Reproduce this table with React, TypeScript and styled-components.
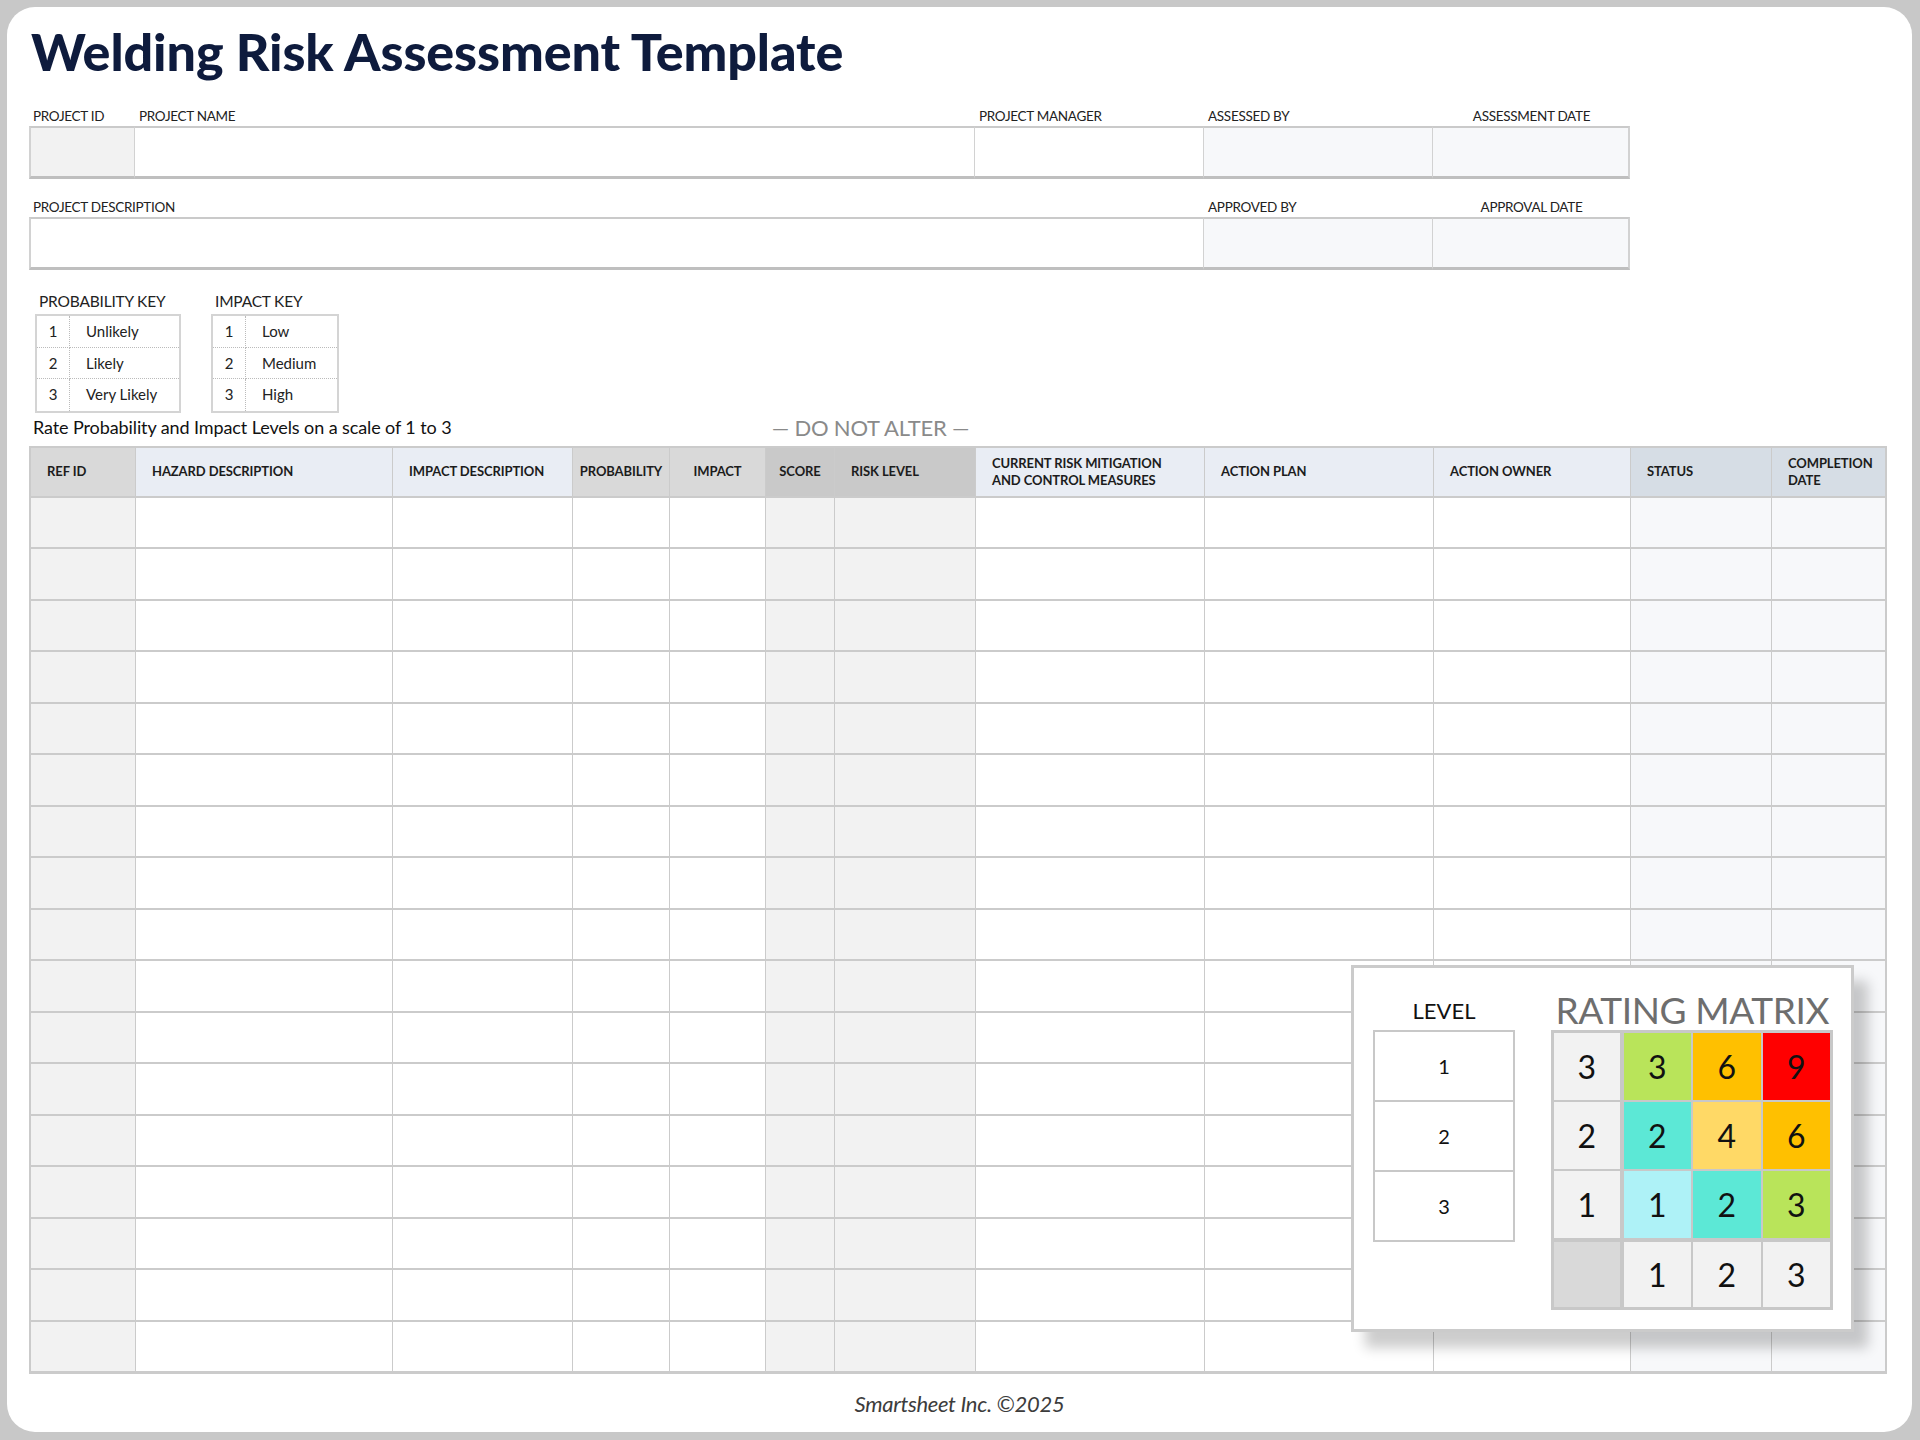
import React from 'react';
import styled, { createGlobalStyle } from 'styled-components';

const GlobalStyle = createGlobalStyle`
  body {
    margin: 0;
    background: #c8c8c8;
    font-family: Lato, 'Liberation Sans', sans-serif;
    color: #1a1a1a;
  }
  * {
    box-sizing: border-box;
  }
`;

const Card = styled.div`
  width: 1905px;
  height: 1425px;
  margin: 7px 8px 8px 7px;
  background: #ffffff;
  border-radius: 28px;
  padding: 14px 0 0 22px;
  display: flex;
  flex-direction: column;
`;

const Title = styled.h1`
  margin: 0 0 0 2px;
  font-size: 52px;
  line-height: 60px;
  font-weight: 900;
  color: #0e1b3d;
  letter-spacing: -0.1px;
`;

const InfoGrid = styled.div<{ $cols: string; $top: number }>`
  display: grid;
  grid-template-columns: ${(p) => p.$cols};
  margin-top: ${(p) => p.$top}px;
  width: fit-content;
`;

const InfoLabel = styled.div<{ $center?: boolean }>`
  font-size: 13.5px;
  line-height: 16px;
  text-transform: uppercase;
  letter-spacing: -0.3px;
  color: #222;
  padding: 0 4px;
  margin-bottom: 2px;
  text-align: ${(p) => (p.$center ? 'center' : 'left')};
`;

const Field = styled.div<{ $bg: string; $first?: boolean; $last?: boolean }>`
  height: 53px;
  background: ${(p) => p.$bg};
  border-top: 2px solid #cacaca;
  border-bottom: 3px solid #bfbfbf;
  border-left: ${(p) => (p.$first ? '2px solid #d2d2d2' : 'none')};
  border-right: ${(p) => (p.$last ? '2px solid #d2d2d2' : '1px solid #d2d2d2')};
`;

const KeysRow = styled.div`
  display: flex;
  gap: 30px;
  margin-top: 22px;
  margin-left: 6px;
`;

const KeyBlock = styled.div`
  display: flex;
  flex-direction: column;
`;

const KeyTitle = styled.div`
  font-size: 15.5px;
  line-height: 18px;
  text-transform: uppercase;
  color: #222;
  padding-left: 4px;
  margin-bottom: 4px;
  letter-spacing: -0.2px;
`;

const KeyTable = styled.div<{ $width: number }>`
  width: ${(p) => p.$width}px;
  border: 2px solid #d4d4d4;
  display: grid;
  grid-template-columns: 33px 1fr;
`;

const KeyCell = styled.div<{ $num?: boolean; $lastRow?: boolean }>`
  height: 31.5px;
  font-size: 15px;
  line-height: 30px;
  color: #222;
  text-align: ${(p) => (p.$num ? 'center' : 'left')};
  padding-left: ${(p) => (p.$num ? 0 : 16)}px;
  border-right: ${(p) => (p.$num ? '1px dotted #bbb' : 'none')};
  border-bottom: ${(p) => (p.$lastRow ? 'none' : '1px dotted #bbb')};
`;

const CaptionRow = styled.div<{ $cols: string }>`
  display: grid;
  grid-template-columns: ${(p) => p.$cols};
  column-gap: 1px;
  padding: 0 2px;
  margin-top: 3px;
  align-items: end;
  width: fit-content;
`;

const Caption = styled.div`
  grid-column: 1 / 6;
  font-size: 18px;
  line-height: 22px;
  color: #111;
  padding: 0 0 2px 2px;
  letter-spacing: -0.1px;
`;

const DoNotAlter = styled.div`
  grid-column: 6 / 8;
  text-align: center;
  font-size: 22px;
  line-height: 24px;
  color: #8a8a8a;
  letter-spacing: -0.2px;
  white-space: nowrap;
`;

const TableArea = styled.div`
  position: relative;
  width: fit-content;
  margin-top: 6px;
`;

const TableGrid = styled.div<{ $cols: string }>`
  display: grid;
  grid-template-columns: ${(p) => p.$cols};
  grid-template-rows: 48px;
  grid-auto-rows: 49.5px;
  column-gap: 1px;
  row-gap: 2px;
  padding: 2px 2px 3px;
  background: #cbcbcb;
`;

const HeadCell = styled.div<{ $bg: string; $center?: boolean }>`
  background: ${(p) => p.$bg};
  display: flex;
  align-items: center;
  justify-content: ${(p) => (p.$center ? 'center' : 'flex-start')};
  padding: ${(p) => (p.$center ? '0 2px' : '0 16px')};
  font-size: 13px;
  line-height: 17px;
  font-weight: 700;
  text-transform: uppercase;
  color: #1c1c1c;
  letter-spacing: -0.1px;
`;

const Cell = styled.div<{ $bg: string }>`
  background: ${(p) => p.$bg};
`;

const MatrixPanel = styled.div`
  position: absolute;
  left: 1322px;
  top: 519px;
  width: 503px;
  height: 367px;
  background: #ffffff;
  border: 3px solid #cbcbcb;
  box-shadow: 14px 16px 12px rgba(0, 0, 0, 0.2);
  display: grid;
  grid-template-columns: 142px 282px;
  grid-template-rows: 62px auto;
  column-gap: 36px;
  padding: 0 18px 0 19px;
`;

const LevelTitle = styled.div`
  align-self: end;
  text-align: center;
  font-size: 22px;
  line-height: 26px;
  color: #111;
  padding-bottom: 6px;
`;

const MatrixTitle = styled.div`
  align-self: end;
  text-align: right;
  font-size: 37px;
  line-height: 40px;
  color: #6e6e6e;
  letter-spacing: -0.4px;
  padding-right: 4px;
`;

const LevelTable = styled.div`
  align-self: start;
  border: 2px solid #c8c8c8;
  background: #c8c8c8;
  display: flex;
  flex-direction: column;
  gap: 2px;
`;

const LevelCell = styled.div`
  height: 68px;
  background: #ffffff;
  display: flex;
  align-items: center;
  justify-content: center;
  font-size: 20px;
  color: #111;
`;

const MatrixGrid = styled.div`
  align-self: start;
  display: grid;
  grid-template-columns: repeat(4, 1fr);
  grid-auto-rows: 67px;
  gap: 2px;
  padding: 3px;
  background: #c8c8c8;
`;

const MatrixCell = styled.div<{ $bg: string; $side?: boolean; $foot?: boolean }>`
  background: ${(p) => p.$bg};
  display: flex;
  align-items: center;
  justify-content: center;
  font-size: 32px;
  color: #111;
  margin-right: ${(p) => (p.$side ? 2 : 0)}px;
  margin-top: ${(p) => (p.$foot ? 2 : 0)}px;
`;

const Footer = styled.div`
  margin-top: 18px;
  margin-left: -22px;
  text-align: center;
  font-size: 22px;
  line-height: 24px;
  font-style: italic;
  color: #3c3c3c;
  letter-spacing: -0.3px;
`;

type Column = {
  label: React.ReactNode;
  head: string;
  body: string;
  width: number;
  center?: boolean;
};

const GRAY = '#d9d9d9';
const DARK = '#c9c9c9';
const BLUE = '#e9edf4';
const SLATE = '#d6dde5';

const columns: Column[] = [
  { label: 'Ref ID', head: GRAY, body: '#f2f2f2', width: 104 },
  { label: 'Hazard Description', head: BLUE, body: '#ffffff', width: 256 },
  { label: 'Impact Description', head: BLUE, body: '#ffffff', width: 179 },
  { label: 'Probability', head: GRAY, body: '#ffffff', width: 96, center: true },
  { label: 'Impact', head: GRAY, body: '#ffffff', width: 95, center: true },
  { label: 'Score', head: DARK, body: '#f2f2f2', width: 68, center: true },
  { label: 'Risk Level', head: DARK, body: '#f2f2f2', width: 140 },
  {
    label: (
      <>
        Current Risk Mitigation
        <br />
        and Control Measures
      </>
    ),
    head: BLUE,
    body: '#ffffff',
    width: 228,
  },
  { label: 'Action Plan', head: BLUE, body: '#ffffff', width: 228 },
  { label: 'Action Owner', head: BLUE, body: '#ffffff', width: 196 },
  { label: 'Status', head: SLATE, body: '#f7f8fa', width: 140 },
  {
    label: (
      <>
        Completion
        <br />
        Date
      </>
    ),
    head: SLATE,
    body: '#f7f8fa',
    width: 113,
  },
];

const tableCols = columns.map((c) => `${c.width}px`).join(' ');
const ROWS = 17;

const probabilityKey = ['Unlikely', 'Likely', 'Very Likely'];
const impactKey = ['Low', 'Medium', 'High'];

const matrix = [
  { side: '3', cells: [['3', '#b9e45a'], ['6', '#ffc000'], ['9', '#ff0000']] },
  { side: '2', cells: [['2', '#5ce8d6'], ['4', '#ffd966'], ['6', '#ffc000']] },
  { side: '1', cells: [['1', '#aef2f7'], ['2', '#5ce8d6'], ['3', '#b9e45a']] },
];

const KeyList = ({ title, items, width }: { title: string; items: string[]; width: number }) => (
  <KeyBlock>
    <KeyTitle>{title}</KeyTitle>
    <KeyTable $width={width}>
      {items.map((item, i) => (
        <React.Fragment key={item}>
          <KeyCell $num $lastRow={i === items.length - 1}>
            {i + 1}
          </KeyCell>
          <KeyCell $lastRow={i === items.length - 1}>{item}</KeyCell>
        </React.Fragment>
      ))}
    </KeyTable>
  </KeyBlock>
);

const RatingMatrix = () => (
  <MatrixPanel>
    <LevelTitle>LEVEL</LevelTitle>
    <MatrixTitle>RATING MATRIX</MatrixTitle>
    <LevelTable>
      {['1', '2', '3'].map((n) => (
        <LevelCell key={n}>{n}</LevelCell>
      ))}
    </LevelTable>
    <MatrixGrid>
      {matrix.map((row) => (
        <React.Fragment key={row.side}>
          <MatrixCell $bg="#f2f2f2" $side>
            {row.side}
          </MatrixCell>
          {row.cells.map(([value, bg], i) => (
            <MatrixCell key={i} $bg={bg}>
              {value}
            </MatrixCell>
          ))}
        </React.Fragment>
      ))}
      <MatrixCell $bg="#d9d9d9" $side $foot />
      {['1', '2', '3'].map((n) => (
        <MatrixCell key={n} $bg="#f2f2f2" $foot>
          {n}
        </MatrixCell>
      ))}
    </MatrixGrid>
  </MatrixPanel>
);

const App = () => {
  return (
    <>
      <GlobalStyle />
      <Card>
        <Title>Welding Risk Assessment Template</Title>

        <InfoGrid $cols="106px 840px 229px 229px 197px" $top={27}>
          <InfoLabel>Project ID</InfoLabel>
          <InfoLabel>Project Name</InfoLabel>
          <InfoLabel>Project Manager</InfoLabel>
          <InfoLabel>Assessed By</InfoLabel>
          <InfoLabel $center>Assessment Date</InfoLabel>
          <Field $bg="#f2f2f2" $first />
          <Field $bg="#ffffff" />
          <Field $bg="#ffffff" />
          <Field $bg="#f7f8fa" />
          <Field $bg="#f7f8fa" $last />
        </InfoGrid>

        <InfoGrid $cols="1175px 229px 197px" $top={20}>
          <InfoLabel>Project Description</InfoLabel>
          <InfoLabel>Approved By</InfoLabel>
          <InfoLabel $center>Approval Date</InfoLabel>
          <Field $bg="#ffffff" $first />
          <Field $bg="#f7f8fa" />
          <Field $bg="#f7f8fa" $last />
        </InfoGrid>

        <KeysRow>
          <KeyList title="Probability Key" items={probabilityKey} width={146} />
          <KeyList title="Impact Key" items={impactKey} width={128} />
        </KeysRow>

        <CaptionRow $cols={tableCols}>
          <Caption>Rate Probability and Impact Levels on a scale of 1 to 3</Caption>
          <DoNotAlter>— DO NOT ALTER —</DoNotAlter>
        </CaptionRow>

        <TableArea>
          <TableGrid $cols={tableCols}>
            {columns.map((c, i) => (
              <HeadCell key={`h${i}`} $bg={c.head} $center={c.center}>
                <span>{c.label}</span>
              </HeadCell>
            ))}
            {Array.from({ length: ROWS }).map((_, r) =>
              columns.map((c, i) => <Cell key={`${r}-${i}`} $bg={c.body} />)
            )}
          </TableGrid>
          <RatingMatrix />
        </TableArea>

        <Footer>Smartsheet Inc. ©2025</Footer>
      </Card>
    </>
  );
};

export default App;
